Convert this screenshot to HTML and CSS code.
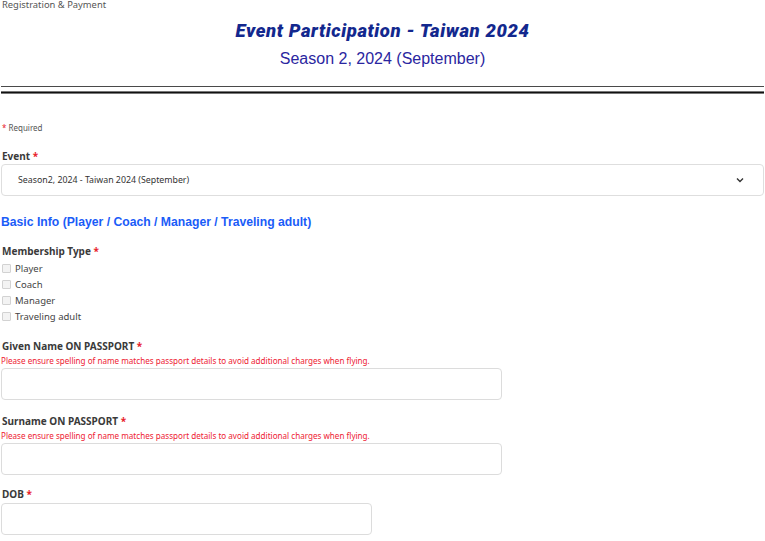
FILE: index.html
```html
<!DOCTYPE html>
<html>
<head>
<meta charset="utf-8">
<link rel="stylesheet" href="styles.css">
</head>
<body>
<div class="page">
  <div class="crumb">Registration &amp; Payment</div>
  <h1 class="title">Event Participation - Taiwan 2024</h1>
  <div class="subtitle">Season 2, 2024 (September)</div>
  <div class="rule-thin"></div>
  <div class="rule-thick"></div>

  <div class="required"><span class="star">*</span> Required</div>

  <div class="label label-event">Event <span class="star">*</span></div>
  <div class="select">
    <span class="select-text">Season2, 2024 - Taiwan 2024 (September)</span>
    <svg class="chev" width="8" height="6" viewBox="0 0 8 6"><path d="M1 1.5 L4 4.5 L7 1.5" fill="none" stroke="#333" stroke-width="1.4"/></svg>
  </div>

  <h2 class="section">Basic Info (Player / Coach / Manager / Traveling adult)</h2>

  <div class="label label-member">Membership Type <span class="star">*</span></div>
  <div class="checks">
    <div class="check"><span class="box"></span>Player</div>
    <div class="check"><span class="box"></span>Coach</div>
    <div class="check"><span class="box"></span>Manager</div>
    <div class="check"><span class="box"></span>Traveling adult</div>
  </div>

  <div class="label label-given">Given Name ON PASSPORT <span class="star">*</span></div>
  <div class="note">Please ensure spelling of name matches passport details to avoid additional charges when flying.</div>
  <div class="input input-name"></div>

  <div class="label label-surname">Surname ON PASSPORT <span class="star">*</span></div>
  <div class="note">Please ensure spelling of name matches passport details to avoid additional charges when flying.</div>
  <div class="input input-name"></div>

  <div class="label label-dob">DOB <span class="star">*</span></div>
  <div class="input input-dob"></div>
</div>
</body>
</html>
```
FILE: styles.css
```css
* { box-sizing: border-box; }
html, body { margin: 0; padding: 0; background: #fff; }
body { font-family: "Noto Sans", "Open Sans", sans-serif; color: #333; overflow: hidden; }
.page { padding: 0 1px; width: 765px; }
.crumb { font-size: 9.4px; line-height: 10px; height: 10px; color: #555; padding-left: 1px; }
.title {
  margin: 10px 0 0; text-align: center;
  font-family: Roboto, sans-serif; font-weight: 900; font-style: italic;
  font-size: 18.5px; line-height: 22px; color: #13288e; letter-spacing: 0.6px;
}
.subtitle {
  margin-top: 7px; text-align: center;
  font-family: "Liberation Sans", Arial, sans-serif; font-size: 16px; line-height: 20px; color: #2a26a0;
}
.rule-thin { margin-top: 17px; height: 1px; background: #4a4a4a; }
.rule-thick { margin-top: 4px; height: 3px; background: #111; border-top: 1px solid #777; border-bottom: 1px solid #777; background-clip: padding-box; }
.star { color: #e8202a; }
.required { margin-top: 28px; font-size: 8px; line-height: 12px; color: #555; padding-left: 1px; }
.label { font-size: 10px; font-weight: 700; line-height: 14px; color: #3a3a3a; padding-left: 1px; }
.label-event { margin-top: 15px; }
.select {
  margin-top: 1px; height: 32px; border: 1px solid #dedede; border-radius: 4px;
  display: flex; align-items: center; justify-content: space-between; padding: 0 19px 0 16px;
}
.select-text { font-size: 8.8px; color: #333; }
.chev { display: block; }
.section {
  margin: 17px 0 0; font-family: "Liberation Sans", Arial, sans-serif; font-weight: 700;
  font-size: 12.2px; line-height: 18px; color: #1a5cf8;
}
.label-member { margin-top: 13px; }
.checks { margin-top: 2px; }
.check { display: flex; align-items: center; height: 16px; font-size: 9.5px; color: #444; }
.box { width: 9px; height: 9px; border: 1px solid #d2d2d2; background: #f3f3f3; border-radius: 1px; margin: 0 4px 0 1px; }
.label-given { margin-top: 15px; }
.note { margin-top: 2px; font-size: 8.1px; line-height: 12px; color: #ee2233; }
.input { margin-top: 1px; height: 32px; border: 1px solid #dcdcdc; border-radius: 4px; }
.input-name { width: 501px; }
.label-surname { margin-top: 14px; }
.label-dob { margin-top: 12px; }
.input-dob { width: 371px; margin-top: 2px; }
```
